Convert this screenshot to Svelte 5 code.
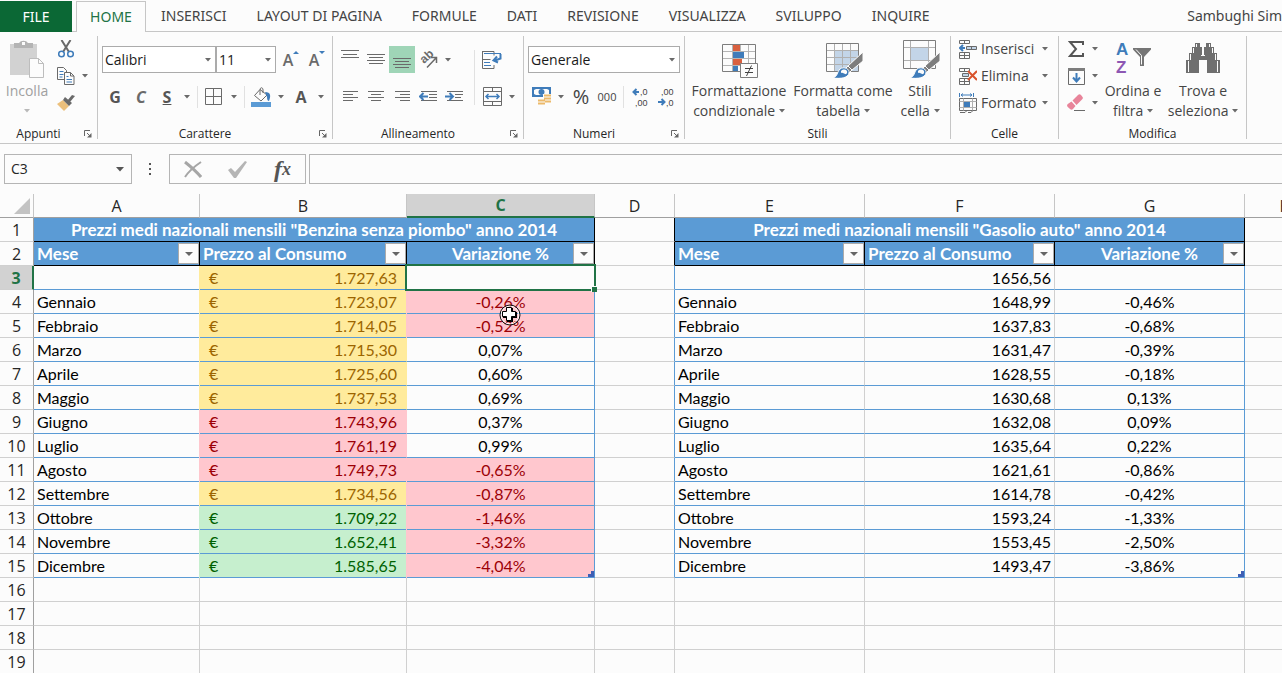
<script lang="ts">
  type Row = {
    mese: string;
    prezzo: string;
    var: string;
    tone: "y" | "r" | "g";
    bad: boolean;
    gasolio: string;
    gvar: string;
  };

  const tabs: string[] = [
    "INSERISCI",
    "LAYOUT DI PAGINA",
    "FORMULE",
    "DATI",
    "REVISIONE",
    "VISUALIZZA",
    "SVILUPPO",
    "INQUIRE",
  ];
  const columns: string[] = ["A", "B", "C", "D", "E", "F", "G", "H"];
  const emptyRows: number[] = [16, 17, 18, 19];

  const rows: Row[] = [
    { mese: "", prezzo: "1.727,63", var: "", tone: "y", bad: false, gasolio: "1656,56", gvar: "" },
    { mese: "Gennaio", prezzo: "1.723,07", var: "-0,26%", tone: "y", bad: true, gasolio: "1648,99", gvar: "-0,46%" },
    { mese: "Febbraio", prezzo: "1.714,05", var: "-0,52%", tone: "y", bad: true, gasolio: "1637,83", gvar: "-0,68%" },
    { mese: "Marzo", prezzo: "1.715,30", var: "0,07%", tone: "y", bad: false, gasolio: "1631,47", gvar: "-0,39%" },
    { mese: "Aprile", prezzo: "1.725,60", var: "0,60%", tone: "y", bad: false, gasolio: "1628,55", gvar: "-0,18%" },
    { mese: "Maggio", prezzo: "1.737,53", var: "0,69%", tone: "y", bad: false, gasolio: "1630,68", gvar: "0,13%" },
    { mese: "Giugno", prezzo: "1.743,96", var: "0,37%", tone: "r", bad: false, gasolio: "1632,08", gvar: "0,09%" },
    { mese: "Luglio", prezzo: "1.761,19", var: "0,99%", tone: "r", bad: false, gasolio: "1635,64", gvar: "0,22%" },
    { mese: "Agosto", prezzo: "1.749,73", var: "-0,65%", tone: "r", bad: true, gasolio: "1621,61", gvar: "-0,86%" },
    { mese: "Settembre", prezzo: "1.734,56", var: "-0,87%", tone: "y", bad: true, gasolio: "1614,78", gvar: "-0,42%" },
    { mese: "Ottobre", prezzo: "1.709,22", var: "-1,46%", tone: "g", bad: true, gasolio: "1593,24", gvar: "-1,33%" },
    { mese: "Novembre", prezzo: "1.652,41", var: "-3,32%", tone: "g", bad: true, gasolio: "1553,45", gvar: "-2,50%" },
    { mese: "Dicembre", prezzo: "1.585,65", var: "-4,04%", tone: "g", bad: true, gasolio: "1493,47", gvar: "-3,86%" },
  ];

  let cell = $state("C3");
  let formula = $state("");
</script>

{#snippet arrow()}
  <svg class="tri" width="6" height="4" viewBox="0 0 6 4"><path d="M0 0h6L3 3.6z" /></svg>
{/snippet}

{#snippet drop(label: string)}
  <button class="drop" aria-label={label}>{@render arrow()}</button>
{/snippet}

{#snippet lines(d: string)}
  <svg width="18" height="20" viewBox="0 0 18 20"><path {d} stroke="#6a6a6a" stroke-width="1" /></svg>
{/snippet}

{#snippet launcher(label: string)}
  <button class="launcher" aria-label={label}>
    <svg width="8" height="8" viewBox="0 0 8 8" fill="none" stroke="#666">
      <path d="M.5 6V.5H6M3 3l3 3" /><path d="M7.5 3v4.5H3z" fill="#666" stroke="none" />
    </svg>
  </button>
{/snippet}

{#snippet filter(label: string)}
  <button class="filter" aria-label={label}>
    <svg width="8" height="4" viewBox="0 0 8 4"><path d="M0 0h8L4 4z" fill="#666" /></svg>
  </button>
{/snippet}

{#snippet brush()}
  <path d="M40 12v9L29 30l-4-4z" fill="#7d7d7d" stroke="#fcfcfc" />
  <path d="M25 26l4 4-3 3-4-4z" fill="#7d7d7d" stroke="#fcfcfc" />
  <path d="M10 38c5-2 4-6 7-9 4-3 10 0 9 4-1 5-8 6-16 5z" fill="#3f7cba" stroke="#fcfcfc" />
  <path d="M18 31c3-3 7-1 6 2-2 3-3-1-6 0z" fill="#fcfcfc" />
{/snippet}

<div class="excel">
  <nav class="tabs">
    <button class="file">FILE</button>
    <button class="tab active">HOME</button>
    {#each tabs as tab}
      <button class="tab">{tab}</button>
    {/each}
    <span class="user">Sambughi Sim</span>
  </nav>

  <div class="ribbon">
    <section class="group clipboard">
      <div class="body">
        <button class="large" disabled>
          <svg width="36" height="38" viewBox="0 0 36 38">
            <path d="M1 4h27v31H1z" fill="#d2d2d2" />
            <path d="M5 3h5a5 4 0 0 1 9 0h5v5H5z" fill="#b4b4b4" />
            <path d="M13 2h3v3h-3z" fill="#fcfcfc" />
            <path d="M20.5 18.5h9l5 5v14h-14z" fill="#fcfcfc" stroke="#bdbdbd" />
            <path d="M29.5 18.5v5h5" fill="none" stroke="#bdbdbd" />
          </svg>
          <span>Incolla</span>
          <span>{@render arrow()}</span>
        </button>
        <div class="stack">
          <div class="row">
            <button class="icon" aria-label="Taglia">
              <svg width="16" height="18" viewBox="0 0 16 18" fill="none">
                <path d="M3.5 0L11 12M12.5 0L5 12" stroke="#6a6a6a" stroke-width="2" />
                <circle cx="3.5" cy="14" r="2.8" stroke="#3f7cba" stroke-width="1.5" />
                <circle cx="12.5" cy="14" r="2.8" stroke="#3f7cba" stroke-width="1.5" />
              </svg>
            </button>
          </div>
          <div class="row">
            <button class="icon" aria-label="Copia">
              <svg width="18" height="18" viewBox="0 0 18 18" fill="#fcfcfc" stroke="#6a6a6a">
                <path d="M.5.5h6l3 3v9h-9z" />
                <path d="M2.5 4.5h4M2.5 7.5h4M2.5 10h3" stroke="#3f7cba" />
                <path d="M7.5 5.5h6l3.5 3.5v8.5H7.5zM13.5 5.5V9H17" />
                <path d="M9.5 9.5h2M9.5 12.5h5.5M9.5 15h5.5" stroke="#3f7cba" />
              </svg>
            </button>
            {@render drop("Opzioni copia")}
          </div>
          <div class="row">
            <button class="icon" aria-label="Copia formato">
              <svg width="18" height="16" viewBox="0 0 18 16">
                <path d="M0 9l6-4 6 6-5 5z" fill="#ecc07c" />
                <path d="M6 5l2-3 7 6-3 3z" fill="#6a6a6a" />
                <path d="M10 6l5-6 3 1-5 6z" fill="#6a6a6a" />
              </svg>
            </button>
          </div>
        </div>
      </div>
      <footer>Appunti{@render launcher("Apri Appunti")}</footer>
    </section>

    <section class="group font">
      <div class="body lined">
        <div class="row">
          <select class="combo name" aria-label="Tipo di carattere"><option>Calibri</option></select>
          <select class="combo size" aria-label="Dimensione carattere"><option>11</option></select>
          <button class="icon grow first" aria-label="Aumenta">A<svg width="6" height="12" viewBox="0 0 6 12"><path d="M0 3l3-3 3 3z" fill="#3f7cba" /></svg></button>
          <button class="icon grow" aria-label="Riduci">A<svg width="6" height="12" viewBox="0 0 6 12"><path d="M0 0h6L3 3z" fill="#3f7cba" /></svg></button>
        </div>
        <div class="row">
          <button class="icon glyph">G</button>
          <button class="icon glyph italic">C</button>
          <button class="icon glyph under">S</button>
          {@render drop("Tipo sottolineatura")}
          <i class="sep"></i>
          <button class="icon" aria-label="Bordi">
            <svg width="18" height="18" viewBox="0 0 18 18" fill="none" stroke="#6a6a6a"><path d="M.5.5h16v16H.5zM8.5.5v16M.5 8.5h16" /></svg>
          </button>
          {@render drop("Altri bordi")}
          <i class="sep"></i>
          <button class="icon" aria-label="Colore riempimento">
            <svg width="20" height="20" viewBox="0 0 20 20" fill="none">
              <path d="M9 2.5L3.5 8.5 10 14l6-6z" fill="#fcfcfc" stroke="#6a6a6a" />
              <path d="M9 8V3c0-3 3-3 3 0v3" stroke="#6a6a6a" />
              <path d="M14 5c6 0 6 4 4 9-1 0-2-1-2-4z" fill="#3f7cba" />
              <path d="M0 15h20v5H0z" fill="#5b9bd5" />
            </svg>
          </button>
          {@render drop("Altri riempimenti")}
          <button class="icon glyph">A</button>
          {@render drop("Altri colori")}
        </div>
      </div>
      <footer>Carattere{@render launcher("Impostazioni carattere")}</footer>
    </section>

    <section class="group align">
      <div class="body">
        <div class="lined">
          <div class="row">
            <button class="icon" aria-label="Allinea in alto">{@render lines("M0 .5h18M2 4.5h14M0 7.5h18")}</button>
            <button class="icon" aria-label="Allinea al centro">{@render lines("M0 4.5h18M2 7.5h14M0 10.5h18M2 13.5h14")}</button>
            <button class="icon on" aria-label="Allinea in basso">{@render lines("M0 8.5h18M2 11.5h14M0 14.5h18M2 17.5h14")}</button>
            <button class="icon" aria-label="Orientamento">
              <svg class="angle" width="26" height="27" viewBox="0 0 26 27">
                <text transform="translate(9 18) rotate(-42)">ab</text>
                <path d="M12 21.5L21 12M16 11.5h5.5V17" fill="none" stroke="#6a6a6a" stroke-width="1.5" />
              </svg>
            </button>
            {@render drop("Opzioni orientamento")}
          </div>
          <div class="row">
            <button class="icon" aria-label="Allinea a sinistra">{@render lines("M2 4.5h15M2 7.5h10M2 10.5h15M2 13.5h10")}</button>
            <button class="icon" aria-label="Centra">{@render lines("M1 4.5h16M4 7.5h10M1 10.5h16M4 13.5h10")}</button>
            <button class="icon" aria-label="Allinea a destra">{@render lines("M2 4.5h15M7 7.5h10M2 10.5h15M7 13.5h10")}</button>
            <button class="icon" aria-label="Riduci rientro">
              <svg width="18" height="12" viewBox="0 0 18 12" fill="none">
                <path d="M2 .5h16M10 3.5h8M10 6.5h8M2 9.5h16" stroke="#6a6a6a" /><path d="M9 5.5H1M4.5 2L1 5.5 4.5 9" stroke="#3f7cba" stroke-width="2" />
              </svg>
            </button>
            <button class="icon" aria-label="Aumenta rientro">
              <svg width="18" height="12" viewBox="0 0 18 12" fill="none">
                <path d="M2 .5h16M10 3.5h8M10 6.5h6M2 9.5h16" stroke="#6a6a6a" /><path d="M0 5.5h8M4.5 2L8 5.5 4.5 9" stroke="#3f7cba" stroke-width="2" />
              </svg>
            </button>
          </div>
        </div>
        <i class="sep tall"></i>
        <div class="lined">
          <div class="row">
            <button class="icon" aria-label="Testo a capo">
              <svg width="20" height="18" viewBox="0 0 20 18" fill="none">
                <path d="M.5 0v17.5h11.5V14M.5.5h11.5v4M.5 8.5h8" stroke="#6a6a6a" />
                <path d="M2 2.5h17M2 11.5h6M2 14.5h7" stroke="#3f7cba" />
                <path d="M18.5 3v4.5L13 9.5M15 5.5l-3.5 4 4.5 2" stroke="#3f7cba" stroke-width="2" />
              </svg>
            </button>
          </div>
          <div class="row">
            <button class="icon" aria-label="Unisci e centra">
              <svg width="19" height="19" viewBox="0 0 19 19" fill="none">
                <path d="M.5.5h18v18H.5zM.5 4.5h18M.5 14.5h18M9.5.5v4M9.5 14.5v4" stroke="#6a6a6a" />
                <path d="M3 9.5h13M5.5 7L3 9.5 5.5 12M13.5 7L16 9.5 13.5 12" stroke="#3f7cba" stroke-width="1.5" />
              </svg>
            </button>
            {@render drop("Opzioni unione")}
          </div>
        </div>
      </div>
      <footer>Allineamento{@render launcher("Impostazioni allineamento")}</footer>
    </section>

    <section class="group number">
      <div class="body lined">
        <div class="row">
          <select class="combo format" aria-label="Formato numero"><option>Generale</option></select>
        </div>
        <div class="row">
          <button class="icon" aria-label="Contabilità">
            <svg width="19" height="19" viewBox="0 0 19 19">
              <path d="M0 0h19v10H0z" fill="#3f7cba" /><path d="M2 3l2-1h11l2 1v4l-2 1H4L2 7z" fill="#fcfcfc" /><circle cx="9.5" cy="5" r="3" fill="#3f7cba" />
              <path d="M11 7h8v11h-5v1H6v-8h5z" fill="#fcfcfc" />
              <path d="M12 7.5h7v2h-7zM12 10.5h7v2h-7zM13 13.5h6v2h-6zM6 12.5h7v2H6zM6 15.5h7v2H6z" fill="#ecb96a" />
            </svg>
          </button>
          {@render drop("Altri formati contabilità")}
          <button class="icon percent">%</button>
          <button class="icon zeros">000</button>
          <i class="sep"></i>
          <button class="icon" aria-label="Aumenta decimali">
            <svg class="decimals" width="18" height="24" viewBox="0 0 18 24">
              <path d="M8 7H3M5.5 4L2.5 7l3 3" fill="none" stroke="#3f7cba" stroke-width="2" />
              <text x="9" y="10">,0</text><text x="4" y="21">,00</text>
            </svg>
          </button>
          <button class="icon" aria-label="Diminuisci decimali">
            <svg class="decimals" width="18" height="24" viewBox="0 0 18 24">
              <path d="M1 17h6M4.5 14l3 3-3 3" fill="none" stroke="#3f7cba" stroke-width="2" />
              <text x="4" y="10">,00</text><text x="9" y="21">,0</text>
            </svg>
          </button>
        </div>
      </div>
      <footer>Numeri{@render launcher("Impostazioni numeri")}</footer>
    </section>

    <section class="group styles">
      <div class="body">
        <button class="large w-cond">
          <svg width="38" height="38" viewBox="0 0 38 38">
            <path d="M2.5 4.5h33v27h-33z" fill="#fcfcfc" stroke="#7d7d7d" />
            <path d="M3 11.5h32M3 18.5h32M3 25.5h32M12.5 5v26M20.5 5v26M28.5 5v26" stroke="#b5b5b5" />
            <path d="M13 5h7v6h-7z" fill="#d9603f" /><path d="M13 12h11v6H13z" fill="#3f7cba" />
            <path d="M13 19h9v6h-9z" fill="#d9603f" /><path d="M13 26h5v5h-5z" fill="#3f7cba" />
            <path d="M20.5 23.5h17v14h-17z" fill="#fcfcfc" stroke="#7d7d7d" />
            <path d="M25 28.5h8M25 32.5h8M31.5 25.5L26.5 36" stroke="#444" />
          </svg>
          <span>Formattazione</span>
          <span>condizionale {@render arrow()}</span>
        </button>
        <button class="large w-table">
          <svg width="40" height="38" viewBox="0 0 40 38">
            <path d="M3.5 3.5h32v28h-32z" fill="#fcfcfc" stroke="#7d7d7d" />
            <path d="M12 10h23v21H12z" fill="#c3d5e8" />
            <path d="M4 10.5h31M4 17.5h31M4 24.5h31M11.5 4v27M19.5 4v27M27.5 4v27" stroke="#b0b0b0" />
            {@render brush()}
          </svg>
          <span>Formatta come</span>
          <span>tabella {@render arrow()}</span>
        </button>
        <button class="large w-style">
          <svg width="40" height="38" viewBox="0 0 40 38">
            <path d="M3.5.5h32v28h-32z" fill="#fcfcfc" stroke="#7d7d7d" />
            <path d="M11 8h17v12H11z" fill="#c3d5e8" />
            <path d="M4 7.5h31M4 20.5h31M10.5 1v27M28.5 1v27" stroke="#b0b0b0" />
            {@render brush()}
          </svg>
          <span>Stili</span>
          <span>cella {@render arrow()}</span>
        </button>
      </div>
      <footer>Stili</footer>
    </section>

    <section class="group cells">
      <div class="body stack">
        <button class="wide">
          <svg width="18" height="19" viewBox="0 0 18 19" fill="none" stroke="#6a6a6a">
            <path d="M.5.5h10v3H.5zM5.5.5v3M.5 12.5h10v6H.5zM5.5 12.5v6M.5 15.5h10" />
            <path d="M7.5 6.5h10v3h-10zM12.5 6.5v3" fill="#c3d5e8" /><path d="M6 8H1M4 5L1 8l3 3" stroke="#3f7cba" stroke-width="2" />
          </svg>
          <span>Inserisci</span>{@render arrow()}
        </button>
        <button class="wide">
          <svg width="18" height="19" viewBox="0 0 18 19" fill="none" stroke="#6a6a6a">
            <path d="M.5 1.5h10v3H.5zM5.5 1.5v3M.5 11.5h10v6H.5zM5.5 11.5v6M.5 14.5h10" /><path d="M3.5 6.5h6v3h-6z" fill="#c3d5e8" />
            <path d="M9 4l9 9M18 4l-9 9" stroke="#d9532c" stroke-width="2" />
          </svg>
          <span>Elimina</span>{@render arrow()}
        </button>
        <button class="wide">
          <svg width="18" height="20" viewBox="0 0 18 20" fill="none" stroke="#6a6a6a">
            <path d="M.5 0v4M14.5 0v4M2 2h11M4 .5L2 2l2 1.5M11 .5L13 2l-2 1.5" stroke="#3f7cba" />
            <path d="M.5 5.5h17v12H.5z" /><path d="M.5 8.5h17M.5 14.5h17M4.5 5.5v12M13.5 5.5v12" stroke="#b0b0b0" />
            <path d="M5 9h6v5H5z" fill="#3f7cba" stroke="none" /><path d="M1 19.5h5l2-2M9 19.5h3l2-2" />
          </svg>
          <span>Formato</span>{@render arrow()}
        </button>
      </div>
      <footer>Celle</footer>
    </section>

    <section class="group edit">
      <div class="body">
        <div class="stack">
          <div class="row">
            <button class="icon" aria-label="Somma">
              <svg width="16" height="16" viewBox="0 0 16 16"><path d="M15 4V1H2l6 7-6 7h13v-3" fill="none" stroke="#555" stroke-width="2" /></svg>
            </button>
            {@render drop("Altre funzioni")}
          </div>
          <div class="row">
            <button class="icon" aria-label="Riempimento">
              <svg width="17" height="17" viewBox="0 0 17 17" fill="none">
                <path d="M.5.5h16v16H.5z" stroke="#6a6a6a" /><path d="M0 0h17v3H0z" fill="#7d7d7d" />
                <path d="M8.5 5v8M5 9.5l3.5 4 3.5-4" stroke="#3f7cba" stroke-width="2" />
              </svg>
            </button>
            {@render drop("Opzioni riempimento")}
          </div>
          <div class="row">
            <button class="icon" aria-label="Cancella">
              <svg width="18" height="18" viewBox="0 0 18 18">
                <path d="M5.5 6.5L11 1c1-1 2-1 3 0l1.5 2c1 1 0 2-1 3L9.5 11z" fill="#e8849a" />
                <path d="M4.5 7.5l4 4.5-2.5 3c-1 1-2 1-3 0L.8 13c-1-1-1-2 0-3z" fill="#e8849a" />
                <path d="M7 16.5h11" stroke="#6a6a6a" />
              </svg>
            </button>
            {@render drop("Opzioni cancella")}
          </div>
        </div>
        <button class="large w-sort">
          <svg class="az" width="36" height="38" viewBox="0 0 36 38">
            <path d="M18 8h18v1.5L29 17v9h-4v-9L18 9.5z" fill="#757575" />
            <path d="M21 9.5l5.5 6v9" fill="none" stroke="#fcfcfc" />
            <text x="1" y="15" fill="#3f7cba">A</text>
            <text x="1" y="33" fill="#8d57b3">Z</text>
          </svg>
          <span>Ordina e</span>
          <span>filtra {@render arrow()}</span>
        </button>
        <button class="large w-find">
          <svg width="34" height="38" viewBox="0 0 34 38">
            <path d="M9 3h5v4h2v8h2V7h2V3h5v4h3v6h3v7h3v13H21V20h-8v13H0V20h3v-7h3V7h3z" fill="#6f6f6f" />
            <path d="M10.5 4v3M23.5 4v3M7.5 8v5M26.5 8v5M4.5 14v6M29.5 14v6M2.5 21v11M31.5 21v11M15 15.5h4" stroke="#fcfcfc" />
          </svg>
          <span>Trova e</span>
          <span>seleziona {@render arrow()}</span>
        </button>
      </div>
      <footer>Modifica</footer>
    </section>
  </div>

  <div class="formula-bar">
    <div class="box name-box">
      <input aria-label="Casella nome" bind:value={cell} />
      <button class="drop" aria-label="Elenco nomi"><svg width="8" height="5" viewBox="0 0 8 5"><path d="M0 0h8L4 4.5z" fill="#555" /></svg></button>
    </div>
    <svg class="dots" width="3" height="12" viewBox="0 0 3 12"><path d="M0 0h2v2H0zM0 5h2v2H0zM0 10h2v2H0z" fill="#555" /></svg>
    <div class="box actions">
      <button aria-label="Annulla">
        <svg width="18" height="17" viewBox="0 0 18 17" fill="none" stroke="#a6a6a6"><path d="M1 1c5 4 11 9 16 15" stroke-width="3" /><path d="M17 1C11 5 5 10 1 16" stroke-width="2" /></svg>
      </button>
      <button aria-label="Invio">
        <svg width="20" height="17" viewBox="0 0 20 17"><path d="M0 9l3-2 4 4L17 0l2 1L8 17H6z" fill="#b5b5b5" /></svg>
      </button>
      <button class="fx" aria-label="Inserisci funzione">f<small>x</small></button>
    </div>
    <input class="box formula" aria-label="Barra della formula" bind:value={formula} />
  </div>

  <div class="sheet">
    <table>
      <colgroup>
        <col class="c-num" /><col class="c-a" /><col class="c-b" /><col class="c-c" /><col class="c-d" />
        <col class="c-e" /><col class="c-e" /><col class="c-e" /><col class="c-h" />
      </colgroup>
      <thead>
        <tr>
          <th class="corner"><svg width="16" height="16" viewBox="0 0 16 16"><path d="M16 0v16H0z" fill="#c3c3c3" /></svg></th>
          {#each columns as col}
            <th scope="col" class:selected={col === "C"}>{col}</th>
          {/each}
        </tr>
      </thead>
      <tbody>
        <tr>
          <th scope="row">1</th>
          <td class="title" colspan="3">Prezzi medi nazionali mensili "Benzina senza piombo" anno 2014</td>
          <td class="edge-black"></td>
          <td class="title" colspan="3">Prezzi medi nazionali mensili "Gasolio auto" anno 2014</td>
          <td></td>
        </tr>
        <tr>
          <th scope="row">2</th>
          <td class="head">Mese{@render filter("Filtra mese")}</td>
          <td class="head">Prezzo al Consumo{@render filter("Filtra prezzo")}</td>
          <td class="head center">Variazione %{@render filter("Filtra variazione")}</td>
          <td class="edge-black"></td>
          <td class="head">Mese{@render filter("Filtra mese gasolio")}</td>
          <td class="head">Prezzo al Consumo{@render filter("Filtra prezzo gasolio")}</td>
          <td class="head center">Variazione %{@render filter("Filtra variazione gasolio")}</td>
          <td></td>
        </tr>
        {#each rows as row, i}
          <tr>
            <th scope="row" class:selected={i === 0}>{i + 3}</th>
            <td class="data">{row.mese}</td>
            <td class="data fill {row.tone}"><div class="money"><span>€</span><span>{row.prezzo}</span></div></td>
            <td class="data center edge" class:fill={row.bad} class:r={row.bad}>
              {row.var}
              {#if i === 0}<i class="cursor-box"></i>{/if}
              {#if i === rows.length - 1}<i class="corner-mark"></i>{/if}
            </td>
            <td class="edge"></td>
            <td class="data">{row.mese}</td>
            <td class="data right">{row.gasolio}</td>
            <td class="data center edge">
              {row.gvar}
              {#if i === rows.length - 1}<i class="corner-mark"></i>{/if}
            </td>
            <td></td>
          </tr>
        {/each}
        {#each emptyRows as n}
          <tr>
            <th scope="row">{n}</th>
            {#each columns as col (col)}<td></td>{/each}
          </tr>
        {/each}
      </tbody>
    </table>
    <svg class="pointer" width="22" height="22" viewBox="0 0 22 22">
      <circle cx="11" cy="11" r="9" fill="none" stroke="#fff" />
      <circle cx="11" cy="11" r="10" fill="none" stroke="#111" />
      <path d="M8 4h6v4h4v6h-4v4H8v-4H4V8h4z" fill="#000" />
      <path d="M7.5 3.5h5v4h4v5h-4v4h-5v-4h-4v-5h4z" fill="#fff" stroke="#000" />
    </svg>
  </div>
</div>

<style>
  :global(body) {
    margin: 0;
    background: #fcfcfc;
  }
  .excel {
    height: 100vh;
    display: flex;
    flex-direction: column;
    overflow: hidden;
    background: #fcfcfc;
    color: #444;
    font: 14px/20px "Open Sans", "Noto Sans", sans-serif;
  }
  button,
  input,
  select {
    margin: 0;
    padding: 0;
    border: 0;
    background: none;
    font: inherit;
    color: inherit;
    box-sizing: border-box;
  }
  button {
    display: flex;
    align-items: center;
    justify-content: center;
    white-space: nowrap;
  }
  .tri {
    fill: #6a6a6a;
    flex: none;
  }

  .tabs {
    display: flex;
    flex: none;
    height: 32px;
    padding-top: 1px;
    box-sizing: border-box;
    border-bottom: 1px solid #c6c6c6;
    font-family: "Noto Sans", sans-serif;
  }
  .file {
    width: 72px;
    margin-right: 4px;
    margin-bottom: -1px;
    background: #0b6835;
    color: #fff;
  }
  .tab {
    padding: 0 15px 0 14px;
    margin-right: 1px;
  }
  .tab.active {
    width: 70px;
    padding: 0;
    margin-bottom: -1px;
    border: 1px solid #c6c6c6;
    border-bottom: 0;
    background: #fcfcfc;
    color: #217346;
  }
  .user {
    margin-left: auto;
    line-height: 30px;
    white-space: nowrap;
  }

  .ribbon {
    display: flex;
    flex: none;
    padding: 4px 0;
    border-bottom: 1px solid #c6c6c6;
  }
  .group {
    display: flex;
    flex: none;
    flex-direction: column;
    height: 103px;
    box-sizing: border-box;
    border-right: 1px solid #c6c6c6;
  }
  .clipboard { width: 98px; }
  .font { width: 235px; }
  .align { width: 191px; }
  .number { width: 161px; }
  .styles { width: 266px; }
  .cells { width: 108px; }
  .edit { width: 188px; }
  .body {
    display: flex;
    flex: 1;
    min-height: 0;
  }
  .lined {
    display: flex;
    flex-direction: column;
    gap: 10px;
    padding-top: 10px;
  }
  .body.lined,
  .align .body,
  .edit .body {
    padding-left: 4px;
  }
  .styles .body {
    padding-left: 3px;
  }
  .stack {
    display: flex;
    flex-direction: column;
    gap: 1px;
  }
  .row {
    display: flex;
    align-items: center;
    height: 27px;
  }
  .stack .row,
  .wide {
    height: 26px;
  }
  footer {
    position: relative;
    height: 14px;
    font-size: 12px;
    line-height: 17px;
    text-align: center;
    color: #262626;
  }
  .clipboard footer,
  .font footer,
  .align footer,
  .number footer {
    padding-right: 20px;
  }
  .launcher {
    position: absolute;
    right: 5px;
    top: 5px;
  }
  .icon {
    width: 26px;
    height: 27px;
    flex: none;
  }
  .icon.on {
    background: #9fd5b7;
  }
  .clipboard .stack .icon {
    width: 24px;
  }
  .drop {
    width: 14px;
    height: 26px;
    flex: none;
  }
  .edit .drop {
    width: 12px;
  }
  .sep {
    width: 1px;
    height: 22px;
    margin: 0 3px;
    background: #e1e1e1;
  }
  .sep.tall {
    height: 55px;
    margin: 14px 4px 0 7px;
  }
  .combo {
    height: 27px;
    padding-left: 2px;
    border: 1px solid #ababab;
    border-radius: 0;
    appearance: none;
    color: #1a1a1a;
    background: #fff url("data:image/svg+xml,%3Csvg xmlns='http://www.w3.org/2000/svg' width='6' height='4'%3E%3Cpath d='M0 0h6L3 3.6z' fill='%236a6a6a'/%3E%3C/svg%3E") no-repeat right 4px center;
  }
  .combo.name { width: 114px; }
  .combo.size { width: 60px; }
  .combo.format { width: 152px; }
  .grow {
    font-size: 16px;
    font-weight: 600;
    color: #6a6a6a;
  }
  .grow.first {
    margin-left: 2px;
  }
  .grow svg {
    align-self: flex-start;
    margin-top: 5px;
  }
  .glyph {
    font-size: 16px;
    font-weight: 700;
    color: #555;
  }
  .italic {
    font-style: italic;
    color: #6a6a6a;
  }
  .under {
    text-decoration: underline;
  }
  .percent {
    font-size: 20px;
  }
  .zeros {
    font-size: 11px;
  }
  .decimals {
    font: 9px "Liberation Sans", sans-serif;
    fill: #444;
  }
  .angle {
    font: bold 12px "Liberation Sans", sans-serif;
    fill: #6a6a6a;
  }
  .az {
    font: bold 17px "Liberation Sans", sans-serif;
  }
  .large {
    flex-direction: column;
    justify-content: flex-start;
    padding-top: 4px;
    color: #444;
  }
  .large > svg {
    margin-bottom: 3px;
  }
  .large span {
    height: 20px;
  }
  .large .tri {
    vertical-align: 3px;
  }
  .large:disabled {
    width: 54px;
    color: #a0a0a0;
  }
  .large:disabled .tri {
    fill: #b9b9b9;
  }
  .w-cond { width: 102px; }
  .w-table { width: 106px; }
  .w-style { width: 48px; }
  .w-sort { width: 64px; }
  .w-find { width: 76px; }
  .wide {
    justify-content: flex-start;
    gap: 4px;
    padding: 0 10px 0 8px;
  }
  .wide .tri {
    margin-left: auto;
  }

  .formula-bar {
    display: flex;
    flex: none;
    align-items: center;
    padding: 10px 0 10px 4px;
  }
  .box {
    display: flex;
    align-items: center;
    height: 30px;
    box-sizing: border-box;
    border: 1px solid #b5b5b5;
  }
  .name-box {
    width: 128px;
  }
  .name-box input {
    flex: 1;
    min-width: 0;
    padding-left: 6px;
    color: #262626;
  }
  .name-box .drop {
    width: 22px;
  }
  .dots {
    margin: 0 17px;
  }
  .actions {
    width: 137px;
  }
  .actions button {
    flex: 1;
  }
  .fx {
    font: italic bold 24px/26px "Liberation Serif", serif;
    color: #555;
  }
  .fx small {
    font-size: 18px;
  }
  .formula {
    flex: 1;
    margin-left: 3px;
    border-right: 0;
    padding: 0 6px;
  }

  .sheet {
    position: relative;
    flex: 1;
    min-height: 0;
    overflow: hidden;
  }
  table {
    width: 1327px;
    table-layout: fixed;
    border-collapse: separate;
    border-spacing: 0;
    font: 16px/20px Lato, Carlito, sans-serif;
    color: #000;
  }
  .c-num { width: 34px; }
  .c-a { width: 166px; }
  .c-b { width: 207px; }
  .c-c { width: 188px; }
  .c-d { width: 80px; }
  .c-e { width: 190px; }
  .c-h { width: 82px; }
  th,
  td {
    height: 24px;
    padding: 0;
    box-sizing: border-box;
    border-right: 1px solid #d0d0d0;
    border-bottom: 1px solid #d0d0d0;
    white-space: nowrap;
  }
  th {
    font-family: "Open Sans", "Noto Sans", sans-serif;
    font-weight: 400;
    color: #262626;
  }
  thead th {
    border-right-color: #c6c6c6;
    border-bottom-color: #a0a0a0;
  }
  tbody th {
    border-right-color: #a0a0a0;
  }
  th.selected {
    background: #d2d2d2;
    color: #217346;
    font-weight: 700;
  }
  thead th.selected {
    border-bottom: 2px solid #217346;
  }
  tbody th.selected {
    border-right: 2px solid #217346;
  }
  .corner {
    padding-right: 3px;
    text-align: right;
    line-height: 0;
    vertical-align: bottom;
  }
  .corner svg {
    margin-bottom: 3px;
  }
  .title,
  .head {
    background: #5b9bd5;
    border-color: #000;
    color: #fff;
    font-size: 17px;
    font-weight: 700;
  }
  .title {
    text-align: center;
  }
  .head {
    position: relative;
    padding-left: 3px;
  }
  .filter {
    position: absolute;
    right: 0;
    bottom: 1px;
    width: 21px;
    height: 21px;
    border: 1px solid #ababab;
    background: #fcfcfc;
  }
  .data {
    position: relative;
    padding: 0 3px;
    border-bottom-color: #5b9bd5;
  }
  .center {
    padding: 0;
    text-align: center;
  }
  .right {
    text-align: right;
  }
  .edge {
    border-right-color: #5b9bd5;
  }
  .edge-black {
    border-right-color: #000;
  }
  .money {
    display: flex;
    justify-content: space-between;
    padding: 0 6px;
  }
  .fill {
    background: var(--bg);
    color: var(--ink);
    box-shadow: -1px 0 0 var(--bg);
  }
  .fill:not(.edge) {
    border-right-color: var(--bg);
  }
  .y {
    --bg: #ffeb9c;
    --ink: #9c6500;
  }
  .r {
    --bg: #ffc7ce;
    --ink: #9c0006;
  }
  .g {
    --bg: #c6efce;
    --ink: #006100;
  }
  .cursor-box {
    position: absolute;
    inset: -2px;
    z-index: 1;
    border: 2px solid #217346;
  }
  .cursor-box::after {
    content: "";
    position: absolute;
    right: -3px;
    bottom: -3px;
    width: 5px;
    height: 5px;
    border: 1px solid #fcfcfc;
    border-width: 1px 0 0 1px;
    background: #217346;
  }
  .corner-mark {
    position: absolute;
    right: 0;
    bottom: 0;
    width: 6px;
    height: 6px;
    background: #3f5fb5;
    clip-path: polygon(50% 0, 100% 0, 100% 100%, 0 100%, 0 50%, 50% 50%);
  }
  .pointer {
    position: absolute;
    left: 499px;
    top: 110px;
    z-index: 2;
  }
</style>
